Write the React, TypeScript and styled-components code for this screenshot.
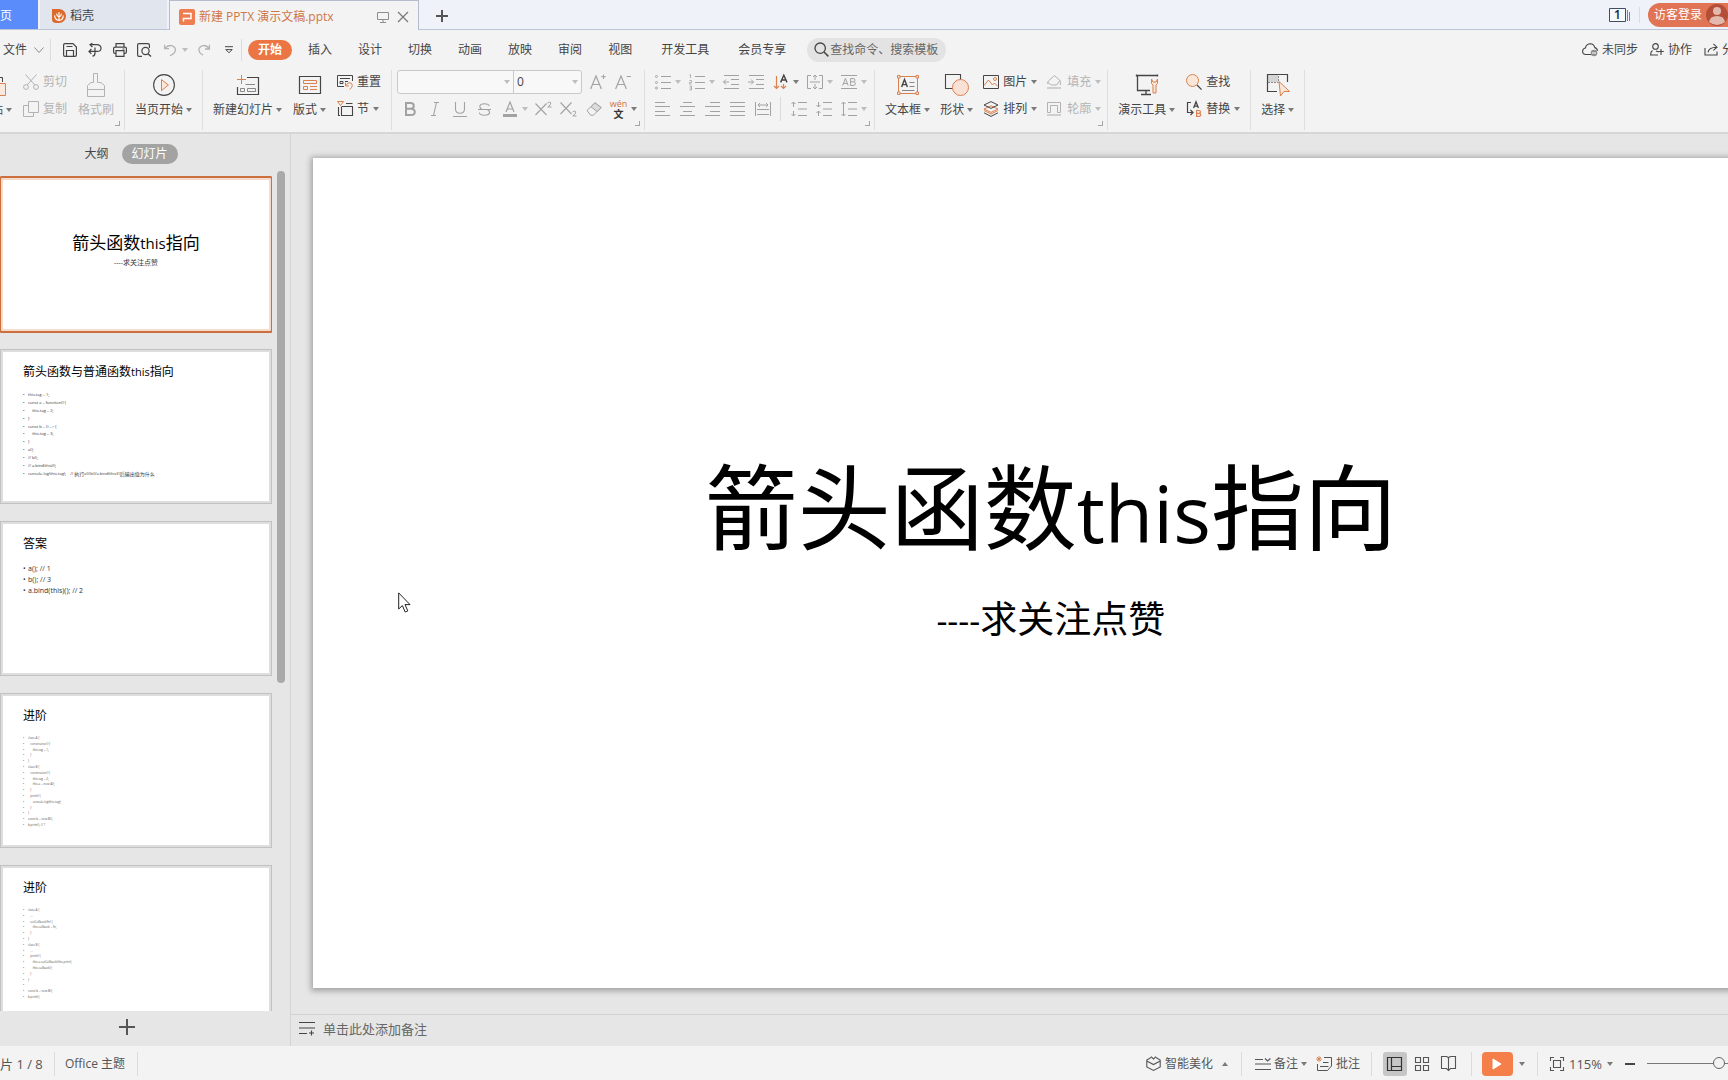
import React from 'react';
import styled, { createGlobalStyle, css } from 'styled-components';

const ink = '#454545';
const soft = '#b3b3b3';
const accent = '#d9814f';
const uiFont = '"Open Sans", "Noto Sans CJK SC", sans-serif';

const GlobalStyle = createGlobalStyle`
  * { box-sizing: border-box; }
  html, body, #root { height: 100%; }
  body { margin: 0; overflow: hidden; background: #e6e6e6; font: 12px/18px ${uiFont}; color: ${ink}; }
  button, input, select { font: inherit; color: inherit; border: 0; margin: 0; padding: 0; background: none; }
  ol, ul { list-style: none; margin: 0; padding: 0; }
  h1, h2, p { margin: 0; font-weight: 400; }
`;

/* ---------- icons ---------- */

const Svg = styled.svg`
  display: block;
  flex: none;
  overflow: visible;
  fill: none;
  stroke: currentColor;
  stroke-width: 1;
`;

type IconProps = { w: number; h?: number; children: React.ReactNode };
const Icon = ({ w, h = w, children }: IconProps) => (
  <Svg width={w} height={h} viewBox={`0 0 ${w} ${h}`} aria-hidden="true">{children}</Svg>
);

const CaretSvg = styled(Svg)<{ $soft?: boolean }>`
  fill: ${(p) => (p.$soft ? '#bdbdbd' : '#7a7a7a')};
  stroke: none;
`;
const Caret = ({ soft: s, up }: { soft?: boolean; up?: boolean }) => (
  <CaretSvg $soft={s} width="6" height="4" viewBox="0 0 6 4" aria-hidden="true">
    <path d={up ? 'M0 4L3 0L6 4Z' : 'M0 0H6L3 4Z'} />
  </CaretSvg>
);

const DocerIcon = () => (
  <Icon w={14}>
    <path d="M0 0H7A7 7 0 0 1 7 14H4Q0 14 0 10Z" fill="#dd6a2b" stroke="none" />
    <path d="M7 11.5V3M7 11.5Q3 11 2.6 6.4M7 11.5Q11 11 11.4 6.4M7 8Q4.6 7 4.6 4.4M7 8Q9.4 7 9.4 4.4" stroke="#fff" strokeWidth="1.1" />
  </Icon>
);
const PresentationIcon = () => (
  <Icon w={16}>
    <rect width="16" height="16" rx="2" fill="#ef7d4f" stroke="none" />
    <path d="M4 4.5H12V9.5H4.5V12.5" stroke="#fff" strokeWidth="1.5" />
  </Icon>
);
const MonitorIcon = () => (
  <Icon w={12}><path d="M.5 1.5H11.5V8.5H.5ZM6 8.5V11M3 11.5H9" stroke="#8d8d8d" /></Icon>
);
const CloseIcon = () => (
  <Icon w={10}><path d="M0 0L10 10M10 0L0 10" stroke="#777" strokeWidth="1.2" /></Icon>
);
const PlusIcon = ({ size, weight }: { size: number; weight: number }) => (
  <Icon w={size}><path d={`M${size / 2} 0V${size}M0 ${size / 2}H${size}`} stroke="#555" strokeWidth={weight} /></Icon>
);
const WindowsIcon = () => (
  <Icon w={22} h={14}>
    <path d="M.5 .5H16.5V13.5H.5Z" stroke="#3f4c66" fill="#f7f9fc" />
    <path d="M18.5 2V13M20.5 4V13" stroke="#7683a0" />
  </Icon>
);
const AvatarIcon = () => (
  <Icon w={22}>
    <circle cx="11" cy="11" r="11" fill="#b34f38" stroke="none" />
    <circle cx="11" cy="7" r="4" fill="#e3b9ad" stroke="none" />
    <path d="M3 18Q4 12 11 12Q18 12 19 18Q11 24 3 18Z" fill="#e3b9ad" stroke="none" />
  </Icon>
);
const ChevronIcon = () => (
  <Icon w={10} h={6}><path d="M.5 .5L5 5.5L9.5 .5" stroke="#8a8a8a" /></Icon>
);
const SaveIcon = () => (
  <Icon w={14}>
    <path d="M2 .6H10L13.4 4V12Q13.4 13.4 12 13.4H2Q.6 13.4 .6 12V2Q.6 .6 2 .6ZM3.5 3.5H9.5M3.5 13V7.5H10.5V13" strokeWidth="1.2" />
  </Icon>
);
const OutputIcon = () => (
  <Icon w={14}>
    <path d="M2 1.6H8.6Q13 1.8 13 5.2Q13 8.4 9 8.4H1M4.4 .2L2 1.6L4.4 4M3.4 6L1 8.4L3.4 10.8M7 4.6V10Q7 13 4.5 13.2" strokeWidth="1.2" />
  </Icon>
);
const PrintIcon = () => (
  <Icon w={14}>
    <path d="M3 4V.6H11V4M3 10.4H2Q.6 10.4 .6 9V5.6Q.6 4.2 2 4.2H12Q13.4 4.2 13.4 5.6V9Q13.4 10.4 12 10.4H11M3 7.6H11V13.4H3ZM9.5 6H11.5" strokeWidth="1.2" />
  </Icon>
);
const PreviewIcon = () => (
  <Icon w={15} h={14}>
    <path d="M5 13.4H2Q.6 13.4 .6 12V2Q.6 .6 2 .6H11Q12.4 .6 12.4 2V5" strokeWidth="1.2" />
    <circle cx="8.5" cy="8" r="3.6" strokeWidth="1.2" /><path d="M11 10.8L14 13.6" strokeWidth="1.4" />
  </Icon>
);
const UndoIcon = () => (
  <Icon w={12}><path d="M.6 .8V4.6H5M.8 4.4Q4 1 7.4 1.6Q11.4 2.6 11.4 6Q11.2 9.4 6 11.6" stroke={soft} strokeWidth="1.3" /></Icon>
);
const RedoIcon = () => (
  <Icon w={12}><path d="M11.4 .8V5H7M11.2 4.6Q8.4 1 5 1.6Q1 2.6 .8 6Q1.4 9.4 5 11.2" stroke={soft} strokeWidth="1.3" /></Icon>
);
const MoreIcon = () => (
  <Icon w={8} h={8}><path d="M0 .7H8M.8 3.6L4 6.8L7.2 3.6Z" /></Icon>
);
const SearchIcon = () => (
  <Icon w={15}><circle cx="6.2" cy="6.2" r="5.2" strokeWidth="1.3" /><path d="M10 10L14.4 14.4" strokeWidth="1.5" /></Icon>
);
const CloudIcon = () => (
  <Icon w={16} h={13}>
    <path d="M9 11.5H4Q.6 11.4 .6 8.2Q.8 5.4 3.4 5Q4.4 .8 8.4 .8Q12 1 12.8 4.6Q15.4 5.4 15.4 8" strokeWidth="1.1" />
    <circle cx="12" cy="10" r="3.3" fill="#8e8e8e" stroke="none" /><path d="M10 10H14" stroke="#fff" />
  </Icon>
);
const CollabIcon = () => (
  <Icon w={14} h={13}>
    <circle cx="5.5" cy="3.4" r="2.8" strokeWidth="1.1" />
    <path d="M2.5 7.6Q.6 8.6 .6 12H8M6 8L8.6 9M11 6V12M8.4 8.5H13.8" strokeWidth="1.1" />
  </Icon>
);
const ShareIcon = () => (
  <Icon w={14} h={13}><path d="M1 5V12H13V8.6M4 9.4Q4.6 4.4 12.6 4.2M9.4 .8L13 4.2L9.4 7.4" strokeWidth="1.1" /></Icon>
);

const PasteIcon = () => (
  <Icon w={20} h={22}>
    <path d="M4 3.5H.5V21.5H8M12 3.5H16.5V8M5 1.5H12V6H5Z" />
    <path d="M9.5 9.5H19.5V21.5H9.5Z" stroke={accent} fill="#fbe9dd" />
  </Icon>
);
const CutIcon = () => (
  <Icon w={16}>
    <path d="M2.5 .5L11.8 11M13.5 .5L4.2 11" /><circle cx="3" cy="13" r="2.4" /><circle cx="13" cy="13" r="2.4" />
  </Icon>
);
const CopyIcon = () => (
  <Icon w={16}><path d="M5.5 .5H15.5V11.5H5.5ZM5.5 4.5H.5V15.5H10.5V11.5" /></Icon>
);
const BrushIcon = () => (
  <Icon w={18} h={24}><path d="M6.5 .5H10.5V9.5H14L17.5 12.5V23.5H.5V12.5L4 9.5H6.5ZM.5 16.5H17.5" /></Icon>
);
const PlayRoundIcon = () => (
  <Icon w={22}>
    <circle cx="11" cy="11" r="10.4" strokeWidth="1.1" /><path d="M8.5 5.6L15.4 11L8.5 16.6Z" stroke={accent} fill="#fbe6da" />
  </Icon>
);
const NewSlideIcon = () => (
  <Icon w={22} h={20}>
    <path d="M10 2.5H21.5V19.5H.5V12" strokeWidth="1.2" />
    <path d="M3.5 13.5H7.5V16.5H3.5ZM10.5 13.5H18.5V16.5H10.5ZM8.5 9.5H18" stroke="#888" />
    <path d="M4.5 0V9M0 4.5H9" stroke={accent} />
  </Icon>
);
const LayoutIcon = () => (
  <Icon w={22} h={18}>
    <path d="M.5 .5H21.5V17.5H.5Z" strokeWidth="1.2" />
    <path d="M4.5 4.5H17.5V7.5H4.5ZM4.5 10.5H8.5V13.5H4.5ZM11 10.5H18M11 13.5H18" stroke={accent} />
  </Icon>
);
const ResetIcon = () => (
  <Icon w={16}>
    <path d="M7 12.5H.5V1.5H15.5V7M3 4.5H13M3 7.5H6V9.5H3ZM8 7.5H11" />
    <path d="M8.5 8.5V12H12M8.8 11.6Q11 7.6 14 9Q17 12 12.6 15.6" stroke={accent} />
  </Icon>
);
const SectionIcon = () => (
  <Icon w={16}>
    <path d="M9 2.5H15.5M1.5 6V14.5H3M5 5.5H15.5V14.5H4.5V5.5" strokeWidth="1.1" />
    <path d="M.5 .5H6.5L3.5 4.5Z" stroke={accent} />
  </Icon>
);
const TextBoxIcon = () => (
  <Icon w={22} h={20}>
    <path d="M2 1.5H20M2 18.5H20M1.5 2V18M20.5 2V18" stroke={accent} />
    <path d="M.5 .5H3V3H.5ZM19 .5H21.5V3H19ZM.5 17H3V19.5H.5ZM19 17H21.5V19.5H19Z" stroke={accent} fill="#f3f3f3" />
    <path d="M4.6 12L7.5 4.5L10.4 12M5.6 9.6H9.4" strokeWidth="1.4" /><path d="M12.5 7.5H17.5M12.5 11.5H17.5M5 15.5H17.5" stroke="#888" />
  </Icon>
);
const ShapesIcon = () => (
  <Icon w={24} h={22}>
    <path d="M.5 .5H15.5V14.5H.5Z" strokeWidth="1.1" /><circle cx="15.5" cy="13.5" r="8" stroke={accent} fill="#f9e2d5" />
  </Icon>
);
const PictureIcon = () => (
  <Icon w={16} h={14}>
    <path d="M.5 .5H15.5V13.5H.5Z" /><path d="M1 10.5L5.5 5L9.5 10L11.5 8L15 11.5" stroke={accent} /><circle cx="12" cy="4" r="1.5" stroke={accent} />
  </Icon>
);
const LayersIcon = () => (
  <Icon w={16}>
    <path d="M1 9.5L8 13L15 9.5M1 8L8 4.8L15 8L8 11.4Z" stroke={accent} />
    <path d="M8 .6L15 4L8 7.4L1 4ZM1 11.8L8 15.4L15 11.8" />
  </Icon>
);
const FillIcon = () => (
  <Icon w={14}><path d="M3 4.5L7.5 .6L13 5.5L9.5 10H4.5L.6 7.5M3 4.5Q.4 6 .6 9M13 5.5Q14 8 13.2 10" /><path d="M0 13H14" strokeWidth="2" stroke="#cfcfcf" /></Icon>
);
const OutlineIcon = () => (
  <Icon w={14}><path d="M.5 10.5V.5H13.5V10.5M3.5 10.5V3.5H10.5V10.5M.5 10.5H3.5M10.5 10.5H13.5" /><path d="M0 13H14" strokeWidth="2" stroke="#cfcfcf" /></Icon>
);
const ToolsIcon = () => (
  <Icon w={22} h={22}>
    <path d="M1 1.5H21M.5 .5V2.5M21.5 .5V2.5M1.5 2V16.5H14M10 16.5V20.5M5 20.5H15" strokeWidth="1.3" />
    <path d="M15.5 5V9.5L17 11V19H20V11L21.5 9.5V5L20 8H17Z" stroke={accent} fill="#fbe6da" />
  </Icon>
);
const FindIcon = () => (
  <Icon w={16}><circle cx="6.5" cy="6.5" r="6" stroke={accent} fill="#fbe6da" /><path d="M11 11L15.6 15.6" strokeWidth="1.3" /></Icon>
);
const ReplaceIcon = () => (
  <Icon w={16}>
    <path d="M5 1.5H1.5V11.5H6.5M4.5 9L7 11.5L4.5 14" strokeWidth="1.2" />
    <path d="M7.6 7L10 .8L12.4 7M8.4 5.2H11.6" strokeWidth="1.3" />
    <path d="M10.6 9.5V15.4H13Q14.8 15.2 14.8 13.8Q14.8 12.6 13 12.4Q14.4 12.2 14.4 10.9Q14.4 9.6 13 9.5ZM10.6 12.4H13" stroke={accent} strokeWidth="1.2" />
  </Icon>
);
const SelectIcon = () => (
  <Icon w={22} h={22}>
    <path d="M1 1H11V8H1Z" fill="#d4d4d4" stroke="none" />
    <path d="M10 17.5H.5V.5H20.5V8" strokeWidth="1.2" /><path d="M1 8.5H11.5V1" stroke="#888" strokeDasharray="2 1" />
    <path d="M12 7.5L22.5 17.5H17L13.5 22Z" stroke={accent} fill="#fbe6da" />
  </Icon>
);

const GrowIcon = () => (<Icon w={16}><path d="M.6 15L6 2L11.4 15M2.5 10.5H9.5" strokeWidth="1.2" /><path d="M13.5 .5V5M11.2 2.7H15.8" /></Icon>);
const ShrinkIcon = () => (<Icon w={16}><path d="M.6 15L6 2L11.4 15M2.5 10.5H9.5" strokeWidth="1.2" /><path d="M11.6 2.5H16" /></Icon>);
const BoldIcon = () => (<Icon w={12} h={14}><path d="M2 1H6.5Q9.8 1 9.8 4Q9.8 6.8 6.5 6.8H2ZM2 6.8H7Q10.8 7 10.8 10Q10.8 13 7 13H2Z" strokeWidth="2" /></Icon>);
const ItalicIcon = () => (<Icon w={10} h={14}><path d="M4 .5H9M1 13.5H6M6.5 .5L3.5 13.5" strokeWidth="1.1" /></Icon>);
const UnderlineIcon = () => (<Icon w={14} h={15}><path d="M2.5 0V7Q2.5 11.2 7 11.2Q11.5 11.2 11.5 7V0M0 14.5H14" strokeWidth="1.1" /></Icon>);
const StrikeIcon = () => (<Icon w={13}><path d="M11.4 3Q10.6 .8 6.5 .8Q2 .8 1.8 3.6Q1.8 5.4 4 6.5M9 6.5Q11.6 7.4 11.6 9.4Q11.4 12.2 6.5 12.2Q2 12.2 1.2 9.6M0 6.5H13" strokeWidth="1.1" /></Icon>);
const FontColorIcon = () => (<Icon w={14} h={15}><path d="M3 10L7 0L11 10M4.4 7H9.6" strokeWidth="1.2" /><path d="M0 13.5H14" strokeWidth="3" /></Icon>);
const SuperIcon = () => (<Icon w={17} h={14}><path d="M.5 1.5L11.5 13M11.5 1.5L.5 13" strokeWidth="1.1" /><path d="M12.6 1Q14.4 -.8 15.8 .8Q16.4 2.4 12.8 5H16.5" /></Icon>);
const SubIcon = () => (<Icon w={17} h={14}><path d="M.5 .5L11.5 12M11.5 .5L.5 12" strokeWidth="1.1" /><path d="M12.6 10Q14.4 8.2 15.8 9.8Q16.4 11.4 12.8 14H16.5" /></Icon>);
const EraserIcon = () => (<Icon w={16} h={14}><path d="M1 8.5L9 .8L15.2 5.6L7.4 13.2H4.6Z" /><path d="M5 4.8L11 9.6L15.2 5.6L9 .8Z" fill="#dcdcdc" /></Icon>);

const ListBase = 'M6 2.5H16M6 8.5H16M6 14.5H16';
const BulletsIcon = () => (<Icon w={16}><path d={ListBase} /><circle cx="1.5" cy="2.5" r="1" /><circle cx="1.5" cy="8.5" r="1" /><circle cx="1.5" cy="14" r="1" /></Icon>);
const NumbersIcon = () => (<Icon w={16}><path d={ListBase} /><path d="M.5 1L1.5 .5V4M.5 6.5H2.5V8.5H.5V10H2.5M.5 12H2.5V16H.5M.5 14H2.5" strokeWidth=".8" /></Icon>);
const OutdentIcon = () => (<Icon w={16} h={14}><path d="M1 .5H16M8 4.5H16M8 9.5H16M1 13.5H16M.5 7H6M3 4.5L.5 7L3 9.5" /></Icon>);
const IndentIcon = () => (<Icon w={16} h={14}><path d="M1 .5H16M8 4.5H16M8 9.5H16M1 13.5H16M0 7H5.5M3 4.5L5.5 7L3 9.5" /></Icon>);
const DirectionIcon = () => (
  <Icon w={14}>
    <path d="M2.5 1V13.5M0 11L2.5 13.5L5 11M9.5 9V13.5M7 11L9.5 13.5L12 11" stroke={accent} strokeWidth="1.2" />
    <path d="M6.6 7.4L9.8 .2L13 7.4M7.6 5H12" stroke="#444" strokeWidth="1.4" />
  </Icon>
);
const AlignTextIcon = () => (<Icon w={16} h={14}><path d="M4 .5H.5V13.5H4M12 .5H15.5V13.5H12M3 7H13M8 0V5M6 2L8 0L10 2M8 9V14M6 12L8 14L10 12" /></Icon>);
const AbIcon = () => (
  <Icon w={16} h={14}>
    <path d="M0 .5H16M0 13.5H16M1.6 10.6L4.4 3.4L7.2 10.6M2.6 8.4H6.2M9.6 3.5V10.5H12Q14.4 10.4 14.4 8.6Q14.4 7 12.4 6.8Q14 6.6 14 5.1Q14 3.5 12 3.5ZM9.6 6.8H12.4" />
  </Icon>
);
const AlignLeftIcon = () => (<Icon w={15} h={14}><path d="M0 .5H10M0 4.5H15M0 9.5H10M0 13.5H15" /></Icon>);
const AlignCenterIcon = () => (<Icon w={15} h={14}><path d="M3 .5H12M0 4.5H15M3 9.5H12M0 13.5H15" /></Icon>);
const AlignRightIcon = () => (<Icon w={15} h={14}><path d="M5 .5H15M0 4.5H15M5 9.5H15M0 13.5H15" /></Icon>);
const JustifyIcon = () => (<Icon w={15} h={14}><path d="M0 .5H15M0 4.5H15M0 9.5H15M0 13.5H15" /></Icon>);
const DistributeIcon = () => (<Icon w={16} h={14}><path d="M.5 0V14M15.5 0V14M2 7.5H14M2 12.5H14M3 3H13M5 1L3 3L5 5M11 1L13 3L11 5" /></Icon>);
const SpaceBeforeIcon = () => (<Icon w={16} h={14}><path d="M7 .5H16M7 7H16M7 13.5H16M2.5 0V5M.5 2L2.5 0L4.5 2M2.5 9V14M.5 12L2.5 14L4.5 12" /></Icon>);
const SpaceAfterIcon = () => (<Icon w={16} h={14}><path d="M7 .5H16M7 7H16M7 13.5H16M2.5 0V5M.5 3L2.5 5L4.5 3M2.5 9V14M.5 11L2.5 9L4.5 11" /></Icon>);
const LineSpaceIcon = () => (<Icon w={16} h={14}><path d="M7 .5H16M7 7H16M7 13.5H16M2.5 0V14M.5 2L2.5 0L4.5 2M.5 12L2.5 14L4.5 12" /></Icon>);

const NotesIcon = () => (<Icon w={16} h={13}><path d="M0 .5H16M0 6H16M0 11.5H8M12.5 8.5V13.5M10 11H15" stroke="#444" strokeWidth="1.1" /></Icon>);
const SmartIcon = () => (<Icon w={15} h={15}><path d="M5 1.6L.8 4V11L7.5 14.4L14.2 11V4L10 1.6M.8 5L7.5 8.6L14.2 5M5 .6L7.5 3L10 .6" strokeWidth="1.1" /></Icon>);
const NoteToggleIcon = () => (<Icon w={16} h={12}><path d="M0 1.5H8M0 6H16M0 11.5H16M10 .5L12.6 3L15.4 .5" strokeWidth="1.2" /></Icon>);
const CommentIcon = () => (
  <Icon w={16} h={15}>
    <path d="M8 1.5H15.5V10L11.5 14.5H1.5V8M7 6.5H12.5M4 10.5H12.5" /><path d="M3 0V6M0 3H6M1 1L5 5M5 1L1 5" stroke={accent} strokeWidth=".9" />
  </Icon>
);
const NormalViewIcon = () => (<Icon w={15} h={14}><path d="M.5 .5H14.5V13.5H.5ZM4.5 .5V13.5M4.5 9.5H14.5" stroke="#333" strokeWidth="1.2" /></Icon>);
const GridViewIcon = () => (<Icon w={14}><path d="M.5 .5H5.5V5.5H.5ZM8.5 .5H13.5V5.5H8.5ZM.5 8.5H5.5V13.5H.5ZM8.5 8.5H13.5V13.5H8.5Z" strokeWidth="1.1" /></Icon>);
const BookIcon = () => (<Icon w={15} h={15}><path d="M7.5 2.5V14.5M.5 .5H5Q7.5 .8 7.5 2.5Q7.5 .8 10 .5H14.5V12.5H9.5L7.5 14.5L5.5 12.5H.5Z" strokeWidth="1.1" /></Icon>);
const PlayIcon = () => (<Icon w={10} h={12}><path d="M1 1L9 6L1 11Z" fill="#fff" stroke="#fff" strokeLinejoin="round" /></Icon>);
const FitIcon = () => (<Icon w={14}><path d="M.5 4V.5H4M10 .5H13.5V4M13.5 10V13.5H10M4 13.5H.5V10M3.5 3.5H10.5V10.5H3.5Z" strokeWidth="1.1" /></Icon>);

/* ---------- shell ---------- */

const Shell = styled.div`
  height: 100%;
  display: flex;
  flex-direction: column;
  overflow: hidden;
`;

const TabStrip = styled.header`
  flex: none;
  height: 30px;
  display: flex;
  background: #eff2f8;
  border-bottom: 1px solid #bcc5d6;
`;
const DocTab = styled.div<{ $kind: 'home' | 'idle' | 'active' }>`
  display: flex;
  align-items: center;
  gap: 4px;
  padding-top: 3px;
  ${(p) => p.$kind === 'home' && css`width: 38px; background: #5a8dfb; color: #fff;`}
  ${(p) => p.$kind === 'idle' && css`width: 127px; margin: 0 2px; padding-left: 12px; background: #e1e5ee;`}
  ${(p) => p.$kind === 'active' && css`
    width: 250px;
    margin-bottom: -1px;
    padding: 2px 5px 0 9px;
    background: #f3f3f3;
    border: solid #b5bccb;
    border-width: 1px 1px 0;
    color: #cf7646;
  `}
`;
const TabLabel = styled.span<{ $grow?: boolean }>`
  white-space: nowrap;
  ${(p) => p.$grow && 'flex: 1;'}
`;
const PlainButton = styled.button`
  display: flex;
  align-items: center;
  justify-content: center;
  gap: 4px;
  white-space: nowrap;
`;
const TabTools = styled.div`display: flex;`;
const TabTool = styled(PlainButton)`width: 20px; height: 20px;`;
const NewTab = styled(PlainButton)`width: 46px; padding-top: 2px;`;
const Fill = styled.div`flex: 1;`;
const Spacer = styled.span<{ $w: number }>`
  flex: none;
  width: ${(p) => p.$w}px;
`;
const AccountArea = styled.div`
  display: flex;
  align-items: center;
`;
const WindowCount = styled(PlainButton)`
  display: grid;
  & > * { grid-area: 1 / 1; }
`;
const CountText = styled.span`
  width: 17px;
  color: #222;
  font-weight: 600;
  line-height: 14px;
`;
const Divider = styled.i<{ $h: number; $gap: number }>`
  flex: none;
  width: 1px;
  height: ${(p) => p.$h}px;
  margin: 0 ${(p) => p.$gap}px;
  background: #dcdcdc;
`;
const LoginButton = styled(PlainButton)`
  height: 24px;
  padding-left: 6px;
  border-radius: 12px 0 0 12px;
  background: #e07454;
  color: #fff;
`;

/* ---------- menu row ---------- */

const MenuRow = styled.div`
  flex: none;
  height: 38px;
  display: flex;
  align-items: center;
  padding: 1px 0 0 3px;
  background: #f3f3f3;
`;
const FileButton = styled(PlainButton)`gap: 7px;`;
const QuickButton = styled(PlainButton)`width: 25px; height: 24px;`;
const QuickCaret = styled(PlainButton)`width: 9px; height: 24px; justify-content: flex-start;`;
const Tabs = styled.nav<{ $gap: number }>`
  display: flex;
  gap: ${(p) => p.$gap}px;
  margin-left: ${(p) => p.$gap}px;
`;
const MenuTab = styled.button<{ $on?: boolean }>`
  height: 20px;
  padding: 0 10px;
  border-radius: 10px;
  white-space: nowrap;
  ${(p) => p.$on && css`background: #ec7544; color: #fff; font-weight: 700;`}
`;
const SearchBox = styled.label`
  display: flex;
  align-items: center;
  gap: 1px;
  width: 139px;
  height: 24px;
  margin-left: 11px;
  padding: 0 7px;
  border-radius: 12px;
  background: #e3e3e3;
`;
const SearchInput = styled.input`
  flex: 1;
  min-width: 0;
  outline: 0;
  &::placeholder { color: #666; opacity: 1; }
`;
const ShareTools = styled.div`
  display: flex;
  gap: 12px;
  width: 146px;
  overflow: hidden;
`;

/* ---------- ribbon ---------- */

const Ribbon = styled.div`
  flex: none;
  height: 66px;
  display: flex;
  padding-top: 2px;
  overflow: hidden;
  background: #f3f3f3;
  border-bottom: 2px solid #d6d6d6;
`;
type Fit = 'normal' | 'tools' | 'shapes';
const groupPadding = { normal: '0 10px', tools: '0 4px 0 5px', shapes: '0 6px 0 10px' };
const Group = styled.section<{ $first?: boolean; $fit?: Fit }>`
  position: relative;
  flex: none;
  display: flex;
  gap: ${(p) => (p.$fit === 'shapes' ? 10 : 11)}px;
  height: 60px;
  padding: ${(p) => groupPadding[p.$fit ?? 'normal']};
  border-right: 1px solid #dedede;
  ${(p) => p.$first && 'margin-left: -31px;'}
`;
const Launcher = styled.button`
  position: absolute;
  right: 4px;
  bottom: 4px;
  width: 5px;
  height: 5px;
  border: solid #a5a5a5;
  border-width: 0 1px 1px 0;
`;
const BigButton = styled.button<{ $off?: boolean }>`
  display: flex;
  flex-direction: column;
  align-items: center;
  height: 52px;
  padding-top: 3px;
  color: ${(p) => (p.$off ? soft : ink)};
`;
const BigIcon = styled.span`
  height: 24px;
  display: flex;
  align-items: center;
`;
const BigLabel = styled.span`
  height: 25px;
  display: flex;
  align-items: center;
  gap: 3px;
  white-space: nowrap;
`;
const Stack = styled.div`
  display: flex;
  flex-direction: column;
  gap: 3px;
`;
const SmallButton = styled.button<{ $off?: boolean }>`
  height: 24px;
  display: flex;
  align-items: center;
  gap: 4px;
  white-space: nowrap;
  color: ${(p) => (p.$off ? soft : ink)};
`;
const SmallIcon = styled.span`
  width: 16px;
  display: flex;
`;
const ToolRow = styled.div`
  height: 24px;
  display: flex;
  align-items: center;
`;
const Tool = styled.button<{ $dark?: boolean }>`
  height: 24px;
  display: flex;
  align-items: center;
  color: ${(p) => (p.$dark ? ink : '#a2a2a2')};
`;
const ToolFace = styled.span`
  width: 25px;
  display: flex;
  flex-direction: column;
  align-items: center;
`;
const ToolCaret = styled.span`
  width: 9px;
  display: flex;
`;
const Combos = styled.div`
  display: flex;
  height: 24px;
  margin-right: 3px;
  border: 1px solid #c9c9c9;
  border-radius: 3px;
  background: #f8f8f8;
`;
const Combo = styled.span<{ $w: number }>`
  width: ${(p) => p.$w}px;
  display: grid;
  align-items: center;
  & + & { border-left: 1px solid #c9c9c9; }
  & > * { grid-area: 1 / 1; }
  & > svg { justify-self: end; margin-right: 3px; pointer-events: none; }
`;
const ComboSelect = styled.select`
  appearance: none;
  width: 100%;
  padding-left: 3px;
  outline: 0;
`;
const Pinyin = styled.span<{ $top?: boolean }>`
  font-size: ${(p) => (p.$top ? 9 : 10)}px;
  line-height: ${(p) => (p.$top ? 10 : 11)}px;
  font-weight: ${(p) => (p.$top ? 400 : 700)};
  color: ${(p) => (p.$top ? '#d2703c' : '#333')};
`;

type BigProps = { icon: React.ReactNode; label: string; caret?: boolean; off?: boolean };
const Big = ({ icon, label, caret = true, off }: BigProps) => (
  <BigButton $off={off}>
    <BigIcon>{icon}</BigIcon>
    <BigLabel>{label}{caret && <Caret />}</BigLabel>
  </BigButton>
);
type SmallProps = { icon: React.ReactNode; label: string; caret?: boolean; off?: boolean };
const Small = ({ icon, label, caret, off }: SmallProps) => (
  <SmallButton $off={off}><SmallIcon>{icon}</SmallIcon>{label}{caret && <Caret soft={off} />}</SmallButton>
);
type ToolItemProps = { icon: React.ReactNode; name: string; caret?: boolean; dark?: boolean };
const ToolItem = ({ icon, name, caret, dark }: ToolItemProps) => (
  <Tool aria-label={name} $dark={dark}>
    <ToolFace>{icon}</ToolFace>
    {caret && <ToolCaret><Caret soft={!dark} /></ToolCaret>}
  </Tool>
);

/* ---------- workspace ---------- */

const Workspace = styled.div`
  flex: 1;
  min-height: 0;
  display: flex;
`;
const SidePane = styled.aside`
  flex: none;
  width: 291px;
  display: flex;
  flex-direction: column;
  border-right: 1px solid #d4d4d4;
`;
const PaneTabs = styled.div`
  display: flex;
  justify-content: center;
  gap: 3px;
  padding: 10px 46px 7px 8px;
`;
const PaneTab = styled.button<{ $on?: boolean }>`
  height: 20px;
  padding: 0 10px;
  border-radius: 10px;
  ${(p) => p.$on && css`background: #a3a3a3; color: #fff;`}
`;
const ThumbArea = styled.div`
  flex: 1;
  min-height: 0;
  display: flex;
  gap: 5px;
`;
const ThumbList = styled.ol`
  width: 272px;
  padding-top: 6px;
  overflow: hidden;
  display: flex;
  flex-direction: column;
  gap: 17px;
`;
const Thumb = styled.button<{ $on?: boolean }>`
  display: block;
  width: 100%;
  height: 155px;
  padding: 2px;
  border: 1px solid #c2c2c2;
  background: #dedede;
  text-align: left;
  color: #000;
  ${(p) => p.$on && css`
    border-color: #cc6f3e;
    border-radius: 2px;
    background: #f6dccd;
    box-shadow: 0 0 0 1px #cc6f3e;
  `}
`;
const ThumbPage = styled.span<{ $cover?: boolean }>`
  display: flex;
  flex-direction: column;
  height: 100%;
  padding: 11px 20px;
  background: #fff;
  ${(p) => p.$cover && css`padding: 50px 0 0; align-items: center;`}
`;
const ThumbTitle = styled.span<{ $cover?: boolean }>`
  font-size: ${(p) => (p.$cover ? 17 : 12)}px;
  line-height: ${(p) => (p.$cover ? 26 : 18)}px;
`;
const ThumbLatin = styled.span<{ $cover?: boolean }>`font-size: ${(p) => (p.$cover ? 15 : 11)}px;`;
const ThumbSub = styled.span`
  font-size: 7px;
  line-height: 14px;
  color: #333;
`;
type Density = 'tiny' | 'small' | 'large';
const density = {
  tiny: css`font-size: 3px; line-height: 4px; height: 91px; margin-top: 11px; color: #555;`,
  small: css`font-size: 4px; line-height: 6px; height: 85px; margin-top: 11px; color: #333;`,
  large: css`font-size: 7px; line-height: 10px; height: 32px; margin-top: 11px; color: #333;`,
};
const ThumbBody = styled.span<{ $d: Density }>`
  display: flex;
  flex-direction: column;
  justify-content: space-between;
  white-space: pre;
  ${(p) => density[p.$d]}
`;
const ThumbLine = styled.span`
  display: flex;
  &::before { content: '•'; width: 5px; }
`;
const ThumbHan = styled.span`font-size: 5px;`;
const ScrollTrack = styled.div`
  width: 8px;
  height: 100%;
`;
const ScrollThumb = styled.div`
  height: 61%;
  border-radius: 4px;
  background: #a9a9a9;
`;
const AddSlide = styled(PlainButton)`
  flex: none;
  height: 35px;
  width: 253px;
  padding-bottom: 4px;
`;

const Editor = styled.main`
  position: relative;
  flex: 1;
  min-width: 0;
  display: flex;
  flex-direction: column;
`;
const Stage = styled.div`
  flex: 1;
  min-height: 0;
  padding: 24px 0 26px 22px;
  overflow: hidden;
`;
const Slide = styled.article`
  height: 100%;
  aspect-ratio: 16 / 9;
  display: grid;
  grid-template-rows: 1fr 1fr;
  justify-items: center;
  background: #fff;
  box-shadow: 0 1px 6px 2px rgba(0, 0, 0, 0.3);
  color: #000;
`;
const SlideTitle = styled.h1`
  align-self: end;
  font-size: 93px;
  line-height: 120px;
`;
const SlideLatin = styled.span<{ $size: number }>`font-size: ${(p) => p.$size}px;`;
const SlideSub = styled.p`
  padding-top: 20px;
  font-size: 37px;
  line-height: 52px;
`;
const Pointer = styled.svg`
  position: absolute;
  left: 107px;
  top: 458px;
`;
const NotesBar = styled.label`
  flex: none;
  height: 32px;
  display: flex;
  align-items: center;
  gap: 8px;
  padding: 0 8px 4px;
  border-top: 1px solid #d2d2d2;
  font-size: 13px;
`;
const NotesInput = styled.input`
  flex: 1;
  outline: 0;
  &::placeholder { color: #666; opacity: 1; }
`;

/* ---------- status bar ---------- */

const StatusBar = styled.footer`
  flex: none;
  height: 34px;
  display: flex;
  align-items: center;
  padding-top: 1px;
  background: #f3f3f3;
  color: #555;
`;
const PageCount = styled.span`
  width: 54px;
  font-size: 13px;
`;
const Theme = styled.span`padding: 0 12px 0 10px;`;
const StatusButton = styled(PlainButton)<{ $gap?: number }>`
  height: 24px;
  gap: ${(p) => p.$gap ?? 4}px;
`;
const ZoomButton = styled(StatusButton)`font-size: 13px;`;
const StatusSet = styled.div<{ $gap: number }>`
  display: flex;
  align-items: center;
  gap: ${(p) => p.$gap}px;
`;
const ViewButton = styled(PlainButton)<{ $on?: boolean }>`
  width: 24px;
  height: 24px;
  border-radius: 3px;
  ${(p) => p.$on && 'background: #c6c6c6;'}
`;
const PlayButton = styled(PlainButton)`
  width: 31px;
  height: 24px;
  border-radius: 4px;
  background: #f47f4b;
`;
const ZoomOut = styled(PlainButton)`
  width: 34px;
  height: 24px;
`;
const ZoomRange = styled.input`
  appearance: none;
  width: 81px;
  height: 24px;
  outline: 0;
  &::-webkit-slider-runnable-track { height: 1px; background: #777; }
  &::-webkit-slider-thumb {
    appearance: none;
    width: 12px;
    height: 12px;
    margin-top: -6px;
    border: 1px solid #666;
    border-radius: 50%;
    background: #f3f3f3;
  }
`;

/* ---------- content ---------- */

const mainTabs = ['开始', '插入', '设计', '切换', '动画', '放映', '审阅', '视图'];
const extraTabs = ['开发工具', '会员专享'];

type Deck = { title: React.ReactNode; d: Density; lines: React.ReactNode[] };
const slides: Deck[] = [
  {
    title: <>箭头函数与普通函数<ThumbLatin>this</ThumbLatin>指向</>,
    d: 'small',
    lines: [
      'this.tag = 1;', 'const a = function() {', '    this.tag = 2;', '}', 'const b = () => {', '    this.tag = 3;', '}',
      'a();', '// b();', '// a.bind(this)();',
      <>console.log(this.tag);    // <ThumbHan>执行</ThumbHan>a()/b()/a.bind(this)()<ThumbHan>后输出值为什么</ThumbHan></>,
    ],
  },
  { title: '答案', d: 'large', lines: ['a(); // 1', 'b(); // 3', 'a.bind(this)(); // 2'] },
  {
    title: '进阶',
    d: 'tiny',
    lines: [
      'class A {', '   constructor() {', '      this.tag = 1;', '   }', '}', 'class B {', '   constructor() {', '      this.tag = 2;',
      '      this.a = new A();', '   }', '   print() {', '      console.log(this.tag);', '   }', '}', 'const b = new B();', 'b.print(); // ?',
    ],
  },
  {
    title: '进阶',
    d: 'tiny',
    lines: [
      'class A {', '   ...', '   setCallback(fn) {', '      this.callback = fn;', '   }', '}', 'class B {', '   ...', '   print() {',
      '      this.a.setCallback(this.print);', '      this.callback();', '   }', '}', ' ', 'const b = new B();', 'b.print();',
    ],
  },
];

export default function App() {
  return (
    <Shell>
      <GlobalStyle />
      <TabStrip>
        <DocTab $kind="home"><TabLabel>页</TabLabel></DocTab>
        <DocTab $kind="idle"><DocerIcon /><TabLabel>稻壳</TabLabel></DocTab>
        <DocTab $kind="active">
          <PresentationIcon />
          <TabLabel $grow>新建 PPTX 演示文稿.pptx</TabLabel>
          <TabTools>
            <TabTool aria-label="放映窗口"><MonitorIcon /></TabTool>
            <TabTool aria-label="关闭"><CloseIcon /></TabTool>
          </TabTools>
        </DocTab>
        <NewTab aria-label="新建标签"><PlusIcon size={12} weight={2} /></NewTab>
        <Fill />
        <AccountArea>
          <WindowCount aria-label="窗口"><WindowsIcon /><CountText>1</CountText></WindowCount>
          <Divider $h={16} $gap={8} />
          <LoginButton>访客登录<AvatarIcon /></LoginButton>
        </AccountArea>
      </TabStrip>

      <MenuRow>
        <FileButton>文件<ChevronIcon /></FileButton>
        <Spacer $w={6} />
        <Divider $h={22} $gap={0} />
        <Spacer $w={6} />
        <QuickButton aria-label="保存"><SaveIcon /></QuickButton>
        <QuickButton aria-label="输出"><OutputIcon /></QuickButton>
        <QuickButton aria-label="打印"><PrintIcon /></QuickButton>
        <QuickButton aria-label="预览"><PreviewIcon /></QuickButton>
        <QuickButton aria-label="撤销"><UndoIcon /></QuickButton>
        <QuickCaret aria-label="撤销列表"><Caret soft /></QuickCaret>
        <QuickButton aria-label="恢复"><RedoIcon /></QuickButton>
        <QuickButton aria-label="更多"><MoreIcon /></QuickButton>
        <Divider $h={22} $gap={0} />
        <Tabs $gap={6}>{mainTabs.map((t, i) => <MenuTab key={t} $on={i === 0}>{t}</MenuTab>)}</Tabs>
        <Tabs $gap={9}>{extraTabs.map((t) => <MenuTab key={t}>{t}</MenuTab>)}</Tabs>
        <SearchBox>
          <SearchIcon />
          <SearchInput type="text" aria-label="搜索" placeholder="查找命令、搜索模板" />
        </SearchBox>
        <Fill />
        <ShareTools>
          <PlainButton><CloudIcon />未同步</PlainButton>
          <PlainButton><CollabIcon />协作</PlainButton>
          <PlainButton><ShareIcon />分享</PlainButton>
        </ShareTools>
      </MenuRow>

      <Ribbon>
        <Group $first>
          <Big icon={<PasteIcon />} label="粘贴" />
          <Stack>
            <Small off icon={<CutIcon />} label="剪切" />
            <Small off icon={<CopyIcon />} label="复制" />
          </Stack>
          <Big off icon={<BrushIcon />} label="格式刷" caret={false} />
          <Launcher aria-label="剪贴板" />
        </Group>
        <Group><Big icon={<PlayRoundIcon />} label="当页开始" /></Group>
        <Group>
          <Big icon={<NewSlideIcon />} label="新建幻灯片" />
          <Big icon={<LayoutIcon />} label="版式" />
          <Stack>
            <Small icon={<ResetIcon />} label="重置" />
            <Small icon={<SectionIcon />} label="节" caret />
          </Stack>
        </Group>
        <Group $fit="tools">
          <Stack>
            <ToolRow>
              <Combos>
                <Combo $w={115}><ComboSelect aria-label="字体"><option> </option></ComboSelect><Caret soft /></Combo>
                <Combo $w={68}><ComboSelect aria-label="字号"><option>0</option></ComboSelect><Caret soft /></Combo>
              </Combos>
              <ToolItem name="增大字号" icon={<GrowIcon />} />
              <ToolItem name="减小字号" icon={<ShrinkIcon />} />
            </ToolRow>
            <ToolRow>
              <ToolItem name="加粗" icon={<BoldIcon />} />
              <ToolItem name="倾斜" icon={<ItalicIcon />} />
              <ToolItem name="下划线" icon={<UnderlineIcon />} />
              <ToolItem name="删除线" icon={<StrikeIcon />} />
              <ToolItem name="字体颜色" icon={<FontColorIcon />} caret />
              <ToolItem name="上标" icon={<SuperIcon />} />
              <ToolItem name="下标" icon={<SubIcon />} />
              <ToolItem name="清除格式" icon={<EraserIcon />} />
              <ToolItem name="拼音" dark caret icon={<><Pinyin $top>wén</Pinyin><Pinyin>文</Pinyin></>} />
            </ToolRow>
          </Stack>
          <Launcher aria-label="字体设置" />
        </Group>
        <Group $fit="tools">
          <Stack>
            <ToolRow>
              <ToolItem name="项目符号" icon={<BulletsIcon />} caret />
              <ToolItem name="编号" icon={<NumbersIcon />} caret />
              <ToolItem name="减少缩进" icon={<OutdentIcon />} />
              <ToolItem name="增加缩进" icon={<IndentIcon />} />
              <ToolItem name="文字方向" icon={<DirectionIcon />} caret dark />
              <ToolItem name="对齐文本" icon={<AlignTextIcon />} caret />
              <ToolItem name="字符间距" icon={<AbIcon />} caret />
            </ToolRow>
            <ToolRow>
              <ToolItem name="左对齐" icon={<AlignLeftIcon />} />
              <ToolItem name="居中" icon={<AlignCenterIcon />} />
              <ToolItem name="右对齐" icon={<AlignRightIcon />} />
              <ToolItem name="两端对齐" icon={<JustifyIcon />} />
              <ToolItem name="分散对齐" icon={<DistributeIcon />} />
              <Divider $h={24} $gap={5} />
              <ToolItem name="段前间距" icon={<SpaceBeforeIcon />} />
              <ToolItem name="段后间距" icon={<SpaceAfterIcon />} />
              <ToolItem name="行距" icon={<LineSpaceIcon />} caret />
            </ToolRow>
          </Stack>
          <Launcher aria-label="段落设置" />
        </Group>
        <Group $fit="shapes">
          <Big icon={<TextBoxIcon />} label="文本框" />
          <Big icon={<ShapesIcon />} label="形状" />
          <Stack>
            <Small icon={<PictureIcon />} label="图片" caret />
            <Small icon={<LayersIcon />} label="排列" caret />
          </Stack>
          <Stack>
            <Small off icon={<FillIcon />} label="填充" caret />
            <Small off icon={<OutlineIcon />} label="轮廓" caret />
          </Stack>
          <Launcher aria-label="形状设置" />
        </Group>
        <Group>
          <Big icon={<ToolsIcon />} label="演示工具" />
          <Stack>
            <Small icon={<FindIcon />} label="查找" />
            <Small icon={<ReplaceIcon />} label="替换" caret />
          </Stack>
        </Group>
        <Group><Big icon={<SelectIcon />} label="选择" /></Group>
      </Ribbon>

      <Workspace>
        <SidePane>
          <PaneTabs>
            <PaneTab>大纲</PaneTab>
            <PaneTab $on>幻灯片</PaneTab>
          </PaneTabs>
          <ThumbArea>
            <ThumbList>
              <li>
                <Thumb $on>
                  <ThumbPage $cover>
                    <ThumbTitle $cover>箭头函数<ThumbLatin $cover>this</ThumbLatin>指向</ThumbTitle>
                    <ThumbSub>----求关注点赞</ThumbSub>
                  </ThumbPage>
                </Thumb>
              </li>
              {slides.map((s, i) => (
                <li key={i}>
                  <Thumb>
                    <ThumbPage>
                      <ThumbTitle>{s.title}</ThumbTitle>
                      <ThumbBody $d={s.d}>{s.lines.map((l, n) => <ThumbLine key={n}>{l}</ThumbLine>)}</ThumbBody>
                    </ThumbPage>
                  </Thumb>
                </li>
              ))}
            </ThumbList>
            <ScrollTrack><ScrollThumb /></ScrollTrack>
          </ThumbArea>
          <AddSlide aria-label="新建幻灯片"><PlusIcon size={16} weight={2} /></AddSlide>
        </SidePane>

        <Editor>
          <Stage>
            <Slide>
              <SlideTitle>箭头函数<SlideLatin $size={79}>this</SlideLatin>指向</SlideTitle>
              <SlideSub><SlideLatin $size={34}>----</SlideLatin>求关注点赞</SlideSub>
            </Slide>
          </Stage>
          <Pointer width="13" height="21" viewBox="0 0 13 21" aria-hidden="true">
            <path d="M.7 .9V17L4.4 13.6L7.2 20L9.8 18.9L7 12.6H12Z" fill="#fff" stroke="#222" />
          </Pointer>
          <NotesBar>
            <NotesIcon />
            <NotesInput type="text" aria-label="备注" placeholder="单击此处添加备注" />
          </NotesBar>
        </Editor>
      </Workspace>

      <StatusBar>
        <PageCount>片 1 / 8</PageCount>
        <Divider $h={24} $gap={0} />
        <Theme>Office 主题</Theme>
        <Divider $h={24} $gap={0} />
        <Fill />
        <StatusButton><SmartIcon />智能美化</StatusButton>
        <Spacer $w={9} />
        <Caret up />
        <Divider $h={24} $gap={13} />
        <StatusSet $gap={9}>
          <StatusButton $gap={3}><NoteToggleIcon />备注<Caret /></StatusButton>
          <StatusButton><CommentIcon />批注</StatusButton>
        </StatusSet>
        <Divider $h={24} $gap={11} />
        <StatusSet $gap={3}>
          <ViewButton $on aria-label="普通视图"><NormalViewIcon /></ViewButton>
          <ViewButton aria-label="幻灯片浏览"><GridViewIcon /></ViewButton>
          <ViewButton aria-label="阅读视图"><BookIcon /></ViewButton>
        </StatusSet>
        <Divider $h={24} $gap={10} />
        <StatusSet $gap={6}>
          <PlayButton aria-label="播放"><PlayIcon /></PlayButton>
          <Caret />
        </StatusSet>
        <Divider $h={24} $gap={12} />
        <ZoomButton $gap={5}><FitIcon />115%<Caret /></ZoomButton>
        <ZoomOut aria-label="缩小"><Icon w={10} h={2}><path d="M0 1H10" strokeWidth="2" stroke="#444" /></Icon></ZoomOut>
        <ZoomRange type="range" aria-label="缩放" defaultValue={95} />
      </StatusBar>
    </Shell>
  );
}
